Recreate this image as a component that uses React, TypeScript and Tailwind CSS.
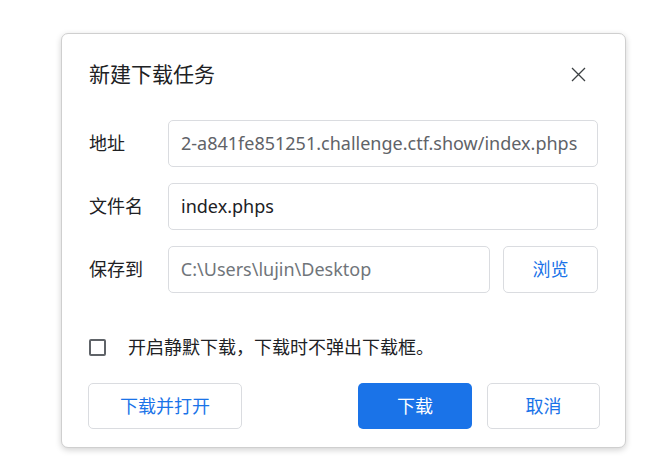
import React from "react";

const font = { fontFamily: '"Noto Sans", "Noto Sans CJK SC", sans-serif' };

export default function App() {
  return (
    <div className="w-[667px] h-[462px] bg-white overflow-hidden" style={font}>
      <div className="ml-[61px] mt-[33px] w-[565px] h-[415px] rounded-[7px] border border-[#cfcfcf] bg-white shadow-[0_2px_6px_rgba(0,0,0,0.18)] flex flex-col">
        <div className="flex items-center justify-between pl-[27px] pr-[39px] pt-[26px] h-[54px]">
          <div className="text-[21px] leading-[28px] text-[#202124]">新建下载任务</div>
          <svg width="15" height="15" viewBox="0 0 15 15" className="text-[#3c4043]">
            <path d="M1 1 L14 14 M14 1 L1 14" stroke="currentColor" strokeWidth="1.3" fill="none" />
          </svg>
        </div>
        <div className="mt-[32px] pl-[27px] pr-[27px] flex flex-col gap-[16px]">
          <div className="flex items-center h-[47px]">
            <div className="w-[79px] text-[18px] text-[#202124]">地址</div>
            <div className="flex-1 h-full rounded-[5px] border border-[#dadce0] flex items-center pl-[12px] pr-[8px] overflow-hidden whitespace-nowrap text-[18px] text-[#5f6368]">
              2-a841fe851251.challenge.ctf.show/index.phps
            </div>
          </div>
          <div className="flex items-center h-[47px]">
            <div className="w-[79px] text-[18px] text-[#202124]">文件名</div>
            <div className="flex-1 h-full rounded-[5px] border border-[#dadce0] flex items-center pl-[12px] text-[18px] text-[#202124]">
              index.phps
            </div>
          </div>
          <div className="flex items-center h-[47px]">
            <div className="w-[79px] text-[18px] text-[#202124]">保存到</div>
            <div className="w-[323px] h-full rounded-[5px] border border-[#dadce0] flex items-center pl-[12px] text-[18px] text-[#70757a]">
              C:\Users\lujin\Desktop
            </div>
            <div className="ml-[13px] w-[95px] h-full rounded-[5px] border border-[#dadce0] flex items-center justify-center text-[18px] text-[#1a73e8]">
              浏览
            </div>
          </div>
        </div>
        <div className="mt-[46px] pl-[27px] flex items-center h-[17px]">
          <div className="w-[17px] h-[17px] rounded-[2px] border-2 border-[#5f6368]" />
          <div className="ml-[22px] text-[18px] text-[#202124] whitespace-nowrap">开启静默下载，下载时不弹出下载框。</div>
        </div>
        <div className="mt-[27px] pl-[26px] pr-[25px] flex items-center h-[46px]">
          <div className="w-[154px] h-full rounded-[5px] border border-[#dadce0] flex items-center justify-center text-[18px] text-[#1a73e8]">
            下载并打开
          </div>
          <div className="flex-1" />
          <div className="w-[114px] h-full rounded-[5px] bg-[#1a73e8] flex items-center justify-center text-[18px] text-white">
            下载
          </div>
          <div className="ml-[15px] w-[113px] h-full rounded-[5px] border border-[#dadce0] flex items-center justify-center text-[18px] text-[#1a73e8]">
            取消
          </div>
        </div>
      </div>
    </div>
  );
}
